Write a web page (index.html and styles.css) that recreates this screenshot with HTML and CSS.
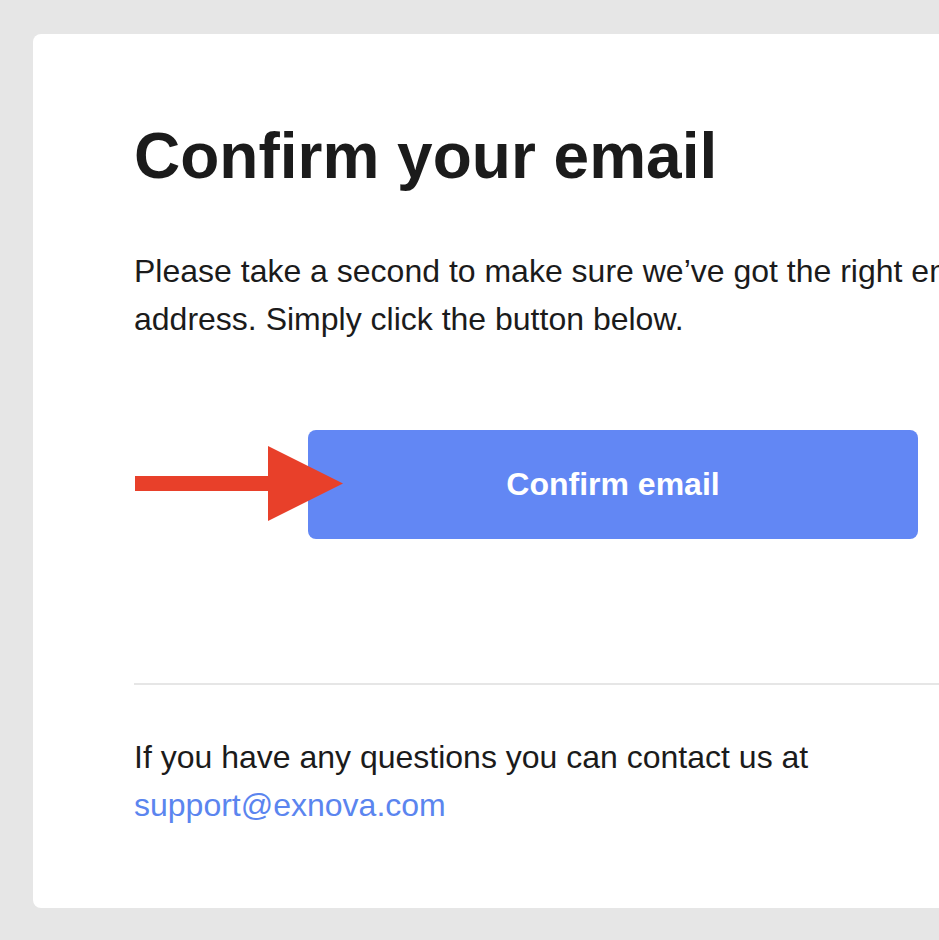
FILE: index.html
```html
<!DOCTYPE html>
<html lang="en">
<head>
<meta charset="utf-8">
<title>Confirm your email</title>
<link rel="stylesheet" href="styles.css">
</head>
<body>
<div class="page">
  <div class="card">
    <h1 class="title">Confirm your email</h1>
    <p class="lead">Please take a second to make sure we’ve got the right email address. Simply click the button below.</p>
    <div class="action">
      <svg class="arrow" width="208" height="75" viewBox="0 0 208 75" aria-hidden="true">
        <rect x="0" y="30" width="135" height="15" fill="#e8402a"/>
        <polygon points="133,0 208,37.5 133,75" fill="#e8402a"/>
      </svg>
      <a class="btn" href="#">Confirm email</a>
    </div>
    <hr class="divider">
    <p class="foot">If you have any questions you can contact us at <a class="link" href="#">support@exnova.com</a></p>
  </div>
</div>
</body>
</html>
```
FILE: styles.css
```css
html, body {
  margin: 0;
  padding: 0;
  background: #e6e6e6;
  overflow: hidden;
}
.page {
  padding: 34px 0 0 33px;
  width: 1300px;
  font-family: "Liberation Sans", Arial, Helvetica, sans-serif;
  color: #1b1b1b;
}
.card {
  box-sizing: border-box;
  width: 1160px;
  background: #ffffff;
  border-radius: 8px;
  padding: 84px 101px 79px 101px;
}
.title {
  margin: 0;
  font-size: 64px;
  line-height: 76px;
  font-weight: 700;
}
.lead {
  margin: 53px 0 0 0;
  font-size: 32px;
  line-height: 48px;
}
.action {
  position: relative;
  margin-top: 87px;
  display: flex;
  justify-content: center;
}
.arrow {
  position: absolute;
  left: 1px;
  top: 16px;
  z-index: 2;
}
.btn {
  display: flex;
  align-items: center;
  justify-content: center;
  width: 610px;
  height: 109px;
  background: #6287f4;
  border-radius: 8px;
  color: #ffffff;
  font-size: 32px;
  font-weight: 700;
  text-decoration: none;
}
.divider {
  margin: 144px 0 0 0;
  border: 0;
  height: 2px;
  background: #e6e6e6;
}
.foot {
  margin: 48px 0 0 0;
  font-size: 32px;
  line-height: 48px;
}
.link {
  color: #5b85ef;
  text-decoration: none;
}
```
